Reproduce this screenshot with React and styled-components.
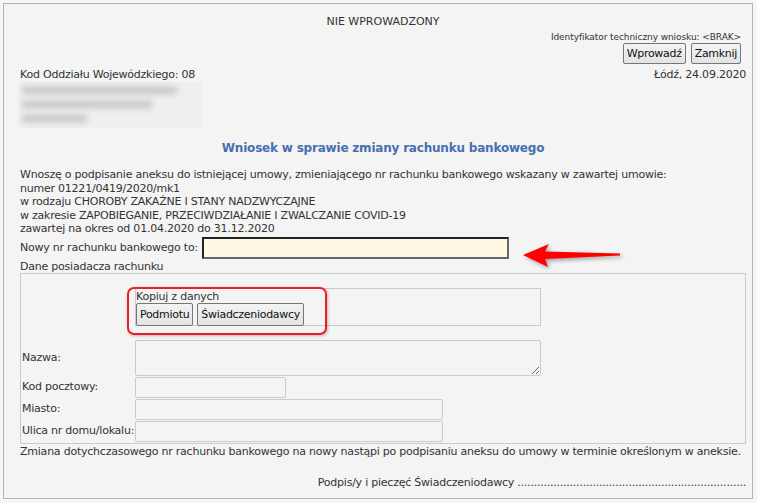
import React from 'react';
import styled, { createGlobalStyle } from 'styled-components';

const GlobalStyle = createGlobalStyle`
  html, body {
    margin: 0;
    padding: 0;
    background: #f7f7f7;
  }
  body {
    font-family: "DejaVu Sans", Verdana, sans-serif;
    font-size: 11px;
    color: #333;
  }
`;

const Panel = styled.div`
  position: relative;
  box-sizing: border-box;
  margin: 3px 0 0 3px;
  width: 750px;
  height: 496px;
  border: 1px solid #b4b4b4;
  background: #f4f4f4;
  padding: 11px 6px 0 16px;
  line-height: 14px;
  letter-spacing: -0.23px;
`;

const Status = styled.div`
  text-align: center;
  height: 14px;
  letter-spacing: 0;
`;

const RightBlock = styled.div`
  display: flex;
  flex-direction: column;
  align-items: flex-end;
  padding-right: 5px;
  margin-top: 3px;
`;

const SmallNote = styled.div`
  font-size: 9px;
  line-height: 11px;
  letter-spacing: -0.08px;
`;

const ButtonRow = styled.div`
  display: flex;
  gap: ${p => p.$gap || 5}px;
  margin-top: ${p => p.$top || 0}px;
`;

const Button = styled.button`
  font-family: inherit;
  font-size: 11px;
  letter-spacing: -0.3px;
  color: #111;
  height: ${p => p.$h || 21}px;
  padding: 0 3px;
  background: linear-gradient(#f3f3f3, #e3e3e3);
  border: 1px solid #767676;
  border-radius: 2px;
`;

const SplitRow = styled.div`
  display: flex;
  justify-content: space-between;
  margin-top: 4px;
`;

const Blurred = styled.div`
  width: 182px;
  height: 46px;
  background: #efefef;
  display: flex;
  flex-direction: column;
  gap: 7px;
  padding: 5px 2px;
  box-sizing: border-box;
`;

const BlurLine = styled.div`
  height: 7px;
  width: ${p => p.$w}px;
  background: #c4c4c4;
  filter: blur(3px);
`;

const Title = styled.div`
  text-align: center;
  color: #4670b0;
  font-weight: bold;
  font-size: 12px;
  letter-spacing: -0.2px;
  margin-top: 13px;
`;

const Paragraph = styled.div`
  margin-top: 13px;
  line-height: 13.5px;
`;

const FieldRow = styled.div`
  display: flex;
  align-items: center;
  gap: 4px;
  margin-top: 1px;
`;

const AccountInput = styled.input`
  box-sizing: border-box;
  width: 307px;
  height: 22px;
  background: #fff8e3;
  border: 2px solid #222;
  border-right-color: #666;
  border-bottom-color: #666;
  margin: 0;
`;

const Caption = styled.div`
  margin-top: 1px;
  line-height: 13px;
`;

const HolderBox = styled.div`
  position: relative;
  box-sizing: border-box;
  width: 726px;
  border: 1px solid #cacaca;
  display: grid;
  grid-template-columns: 114px auto;
  align-items: center;
  justify-items: start;
  padding-bottom: 1px;
`;

const Label = styled.div`
  padding-left: 1px;
  margin-top: ${p => p.$top || 0}px;
`;

const CopyCell = styled.div`
  box-sizing: border-box;
  width: 406px;
  height: 38px;
  margin-top: 14px;
  border: 1px solid #cacaca;
  padding: 1px 0 0 0;
  line-height: 13px;
`;

const NameArea = styled.textarea`
  box-sizing: border-box;
  width: 406px;
  height: 36px;
  margin: 14px 0 0 0;
  display: block;
  background: #f4f4f4;
  border: 1px solid #cacaca;
  border-radius: 2px;
`;

const TextInput = styled.input`
  box-sizing: border-box;
  width: ${p => p.$w}px;
  height: 21px;
  margin: 1px 0 0 0;
  background: #f4f4f4;
  border: 1px solid #cacaca;
  border-radius: 2px;
`;

const Highlight = styled.div`
  position: absolute;
  left: 106px;
  top: 13px;
  width: 200px;
  height: 48px;
  box-sizing: border-box;
  border: 2px solid #ee1c24;
  border-radius: 7px;
  box-shadow: 1px 1px 3px rgba(0, 0, 0, 0.25);
  pointer-events: none;
`;

const Arrow = styled.svg`
  position: absolute;
  left: 512px;
  top: 232px;
  filter: drop-shadow(2px 2px 2px rgba(0, 0, 0, 0.35));
`;

const Notice = styled.div`
  margin-top: 1px;
`;

const Signature = styled.div`
  text-align: right;
  margin-top: 17px;
`;

export default function App() {
  return (
    <>
      <GlobalStyle />
      <Panel>
        <Status>NIE WPROWADZONY</Status>
        <RightBlock>
          <SmallNote>Identyfikator techniczny wniosku: &lt;BRAK&gt;</SmallNote>
          <ButtonRow $gap={5}>
            <Button>Wprowadź</Button>
            <Button>Zamknij</Button>
          </ButtonRow>
        </RightBlock>
        <SplitRow>
          <span>Kod Oddziału Wojewódzkiego: 08</span>
          <span>Łódź, 24.09.2020</span>
        </SplitRow>
        <Blurred>
          <BlurLine $w={155} />
          <BlurLine $w={130} />
          <BlurLine $w={65} />
        </Blurred>
        <Title>Wniosek w sprawie zmiany rachunku bankowego</Title>
        <Paragraph>
          Wnoszę o podpisanie aneksu do istniejącej umowy, zmieniającego nr rachunku bankowego wskazany w zawartej umowie:
          <br />numer 01221/0419/2020/mk1
          <br />w rodzaju CHOROBY ZAKAŹNE I STANY NADZWYCZAJNE
          <br />w zakresie ZAPOBIEGANIE, PRZECIWDZIAŁANIE I ZWALCZANIE COVID-19
          <br />zawartej na okres od 01.04.2020 do 31.12.2020
        </Paragraph>
        <FieldRow>
          <span>Nowy nr rachunku bankowego to:</span>
          <AccountInput />
        </FieldRow>
        <Caption>Dane posiadacza rachunku</Caption>
        <HolderBox>
          <span />
          <CopyCell>
            Kopiuj z danych
            <ButtonRow $gap={4} $top={0}>
              <Button $h={23}>Podmiotu</Button>
              <Button $h={23}>Świadczeniodawcy</Button>
            </ButtonRow>
          </CopyCell>
          <Label $top={14}>Nazwa:</Label>
          <NameArea />
          <Label>Kod pocztowy:</Label>
          <TextInput $w={151} />
          <Label>Miasto:</Label>
          <TextInput $w={308} />
          <Label>Ulica nr domu/lokalu:</Label>
          <TextInput $w={308} />
          <Highlight />
        </HolderBox>
        <Notice>
          Zmiana dotychczasowego nr rachunku bankowego na nowy nastąpi po podpisaniu aneksu do umowy w terminie określonym w aneksie.
        </Notice>
        <Signature>
          Podpis/y i pieczęć Świadczeniodawcy ......................................................................
        </Signature>
        <Arrow width="110" height="36" viewBox="0 0 110 36">
          <path d="M7 19 L33 8 L29 15.5 L104 17.5 L104 19.5 L29 23 L32 31 Z" fill="#ff0000" />
        </Arrow>
      </Panel>
    </>
  );
}
